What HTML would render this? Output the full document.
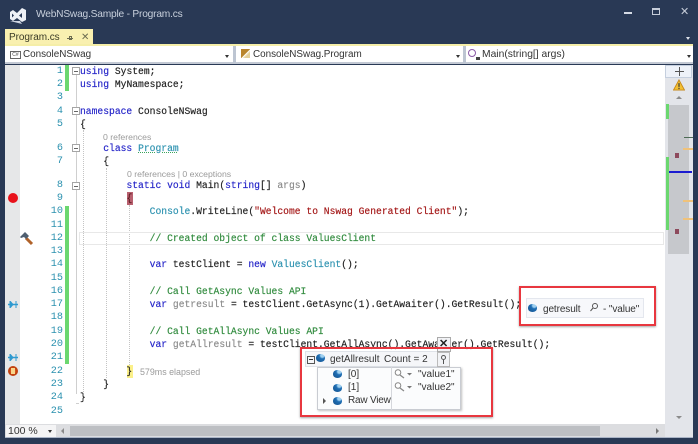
<!DOCTYPE html>
<html><head><meta charset="utf-8"><style>
html,body{margin:0;padding:0}
body{width:698px;height:444px;position:relative;overflow:hidden;background:#293955;font-family:"Liberation Sans",sans-serif}
div{position:absolute;box-sizing:border-box}
.c{font:9.68px/13px "Liberation Mono",monospace;left:80px;white-space:pre;color:#1c1c1c;height:13px;-webkit-text-stroke:.15px currentColor}
.n{font:10.2px/13px "Liberation Mono",monospace;color:#2b91af;width:20px;text-align:right;left:43px}
.k{color:#2323c8}.t{color:#2b91af}.g{color:#2f8a3c}.s{color:#a31515}.m{color:#8a8a8a}
.l{font:8.7px/10px "Liberation Sans",sans-serif;color:#9a9a9a;white-space:pre}
.u{font:9.9px/14px "Liberation Sans",sans-serif;color:#333;white-space:pre}
.b{font:10px/13px "Liberation Sans",sans-serif;color:#333;white-space:pre}
.f{width:8px;height:8px;border:1px solid #a5a5a5;left:72px;background:#fff}
.f:after{content:"";position:absolute;left:1px;top:2.500px;width:4px;height:1px;background:#666}
.d{width:0;border-left:1px dotted #c4c4c4}
.r{border:2.600px solid #e8373f;box-shadow:0 1px 2px rgba(0,0,0,.35)}
.o{width:9px;height:8px;background:radial-gradient(circle at 70% 20%,#9fd0f0 0 18%,#1f6fb5 35%,#14508a 100%);border-radius:50%/45%}
.h{width:4px;height:5px;background:#8d4a5c;left:675px}
.y{width:10px;height:2px;background:#f0c27a;left:683px}
</style></head><body>
<svg style="position:absolute;left:9px;top:7px" width="19" height="17" viewBox="0 0 19 17"><path d="M1 5l3-2 4 3 5-5 4 2v10l-4 2-5-4-4 3-3-2z" fill="#eef1f6"/><path d="M13 6l-3 2.500 3 2.500z" fill="#293955"/><path d="M3 6.500v4l2-2z" fill="#293955"/><path d="M1 14l6 1.500 6 1.500-2-3z" fill="#cfd6e2"/></svg>
<div style="left:36px;top:7px;font-size:10.2px;line-height:16px;letter-spacing:-.2px;color:#c8d0dc;white-space:pre">WebNSwag.Sample - Program.cs</div>
<div style="left:624px;top:12px;width:8px;height:2px;background:#d5dbe5"></div>
<div style="left:652px;top:8px;width:8px;height:7px;border:1px solid #c6cdd9;border-top-width:2px"></div>
<div style="left:680px;top:5px;color:#c6cdd9;font-size:11px;line-height:14px">✕</div>
<div style="left:686px;top:37px;border-left:2px solid transparent;border-right:2px solid transparent;border-top:3px solid #dfe4ec;width:0"></div>
<div style="left:5px;top:29px;width:88px;height:16px;background:#f9f0b0"></div>
<div style="left:9px;top:31px;font-size:10px;line-height:14px;letter-spacing:-.05px;color:#3b3b26;white-space:pre">Program.cs</div>
<div style="left:67px;top:38px;width:6px;height:1px;background:#6b6b50"></div>
<div style="left:69px;top:36px;width:3px;height:4px;border:1px solid #6b6b50"></div>
<div style="left:81px;top:31px;font-size:10px;line-height:13px;color:#6b6b50">✕</div>
<div style="left:5px;top:44px;width:688px;height:2px;background:#f5eea8"></div>
<div style="left:5px;top:46px;width:688px;height:18px;background:#fff;border-bottom:2px solid #c3c9d4"></div>
<div style="left:10px;top:51px;width:11px;height:8px;border:1px solid #666;font:5px/6px 'Liberation Sans',sans-serif;color:#444;text-align:center">C#</div>
<div class="u" style="left:23px;top:48px">ConsoleNSwag</div>
<div style="left:225px;top:55px;border-left:2px solid transparent;border-right:2px solid transparent;border-top:3px solid #333;width:0"></div>
<div style="left:233px;top:46px;width:3px;height:17px;background:#bdc5d2"></div>
<div style="left:241px;top:49px;width:9px;height:9px;background:linear-gradient(135deg,#b9852d 50%,#fff 52%,#e3cf99 70%)"></div>
<div class="u" style="left:253px;top:48px">ConsoleNSwag.Program</div>
<div style="left:456px;top:55px;border-left:2px solid transparent;border-right:2px solid transparent;border-top:3px solid #333;width:0"></div>
<div style="left:463px;top:46px;width:3px;height:17px;background:#bdc5d2"></div>
<div style="left:468px;top:49px;width:8px;height:8px;border:1px solid #8c5aa8;border-radius:50%"></div>
<div style="left:476px;top:57px;width:4px;height:3px;background:#444"></div>
<div class="u" style="left:482px;top:48px;font-size:10.3px">Main(string[] args)</div>
<div style="left:687px;top:55px;border-left:2px solid transparent;border-right:2px solid transparent;border-top:3px solid #333;width:0"></div>

<div style="left:5px;top:65px;width:688px;height:359px;background:#fff"></div>
<div style="left:5px;top:65px;width:15px;height:359px;background:#e6e7e8"></div>
<div style="left:65px;top:65px;width:4px;height:26px;background:#6bd76f"></div>
<div style="left:65px;top:206px;width:4px;height:158px;background:#6bd76f"></div>
<div style="left:76px;top:71px;height:323px;width:1px;background:#cfcfcf"></div>
<div style="left:76px;top:403px;width:3px;height:1px;background:#cfcfcf"></div>
<div class="d" style="left:83px;top:130px;height:262px"></div>
<div class="d" style="left:106px;top:168px;height:210px"></div>
<div class="d" style="left:129px;top:205px;height:160px"></div>
<div style="left:79px;top:232px;width:585px;height:13px;border:1px solid #e8e8e8"></div>

<div class="n" style="top:65px">1</div><div class="n" style="top:78px">2</div><div class="n" style="top:91px">3</div><div class="n" style="top:105px">4</div><div class="n" style="top:118px">5</div><div class="n" style="top:142px">6</div><div class="n" style="top:155px">7</div><div class="n" style="top:179px">8</div><div class="n" style="top:192px">9</div><div class="n" style="top:205px">10</div><div class="n" style="top:219px">11</div><div class="n" style="top:232px">12</div><div class="n" style="top:245px">13</div><div class="n" style="top:258px">14</div><div class="n" style="top:272px">15</div><div class="n" style="top:285px">16</div><div class="n" style="top:298px">17</div><div class="n" style="top:311px">18</div><div class="n" style="top:325px">19</div><div class="n" style="top:338px">20</div><div class="n" style="top:351px">21</div><div class="n" style="top:365px">22</div><div class="n" style="top:378px">23</div><div class="n" style="top:391px">24</div><div class="n" style="top:405px">25</div>

<div class="f" style="top:67px"></div><div class="f" style="top:107px"></div><div class="f" style="top:144px"></div><div class="f" style="top:182px"></div>

<div class="c" style="top:65px"><span class="k">using</span> System;</div>
<div class="c" style="top:78px"><span class="k">using</span> MyNamespace;</div>
<div class="c" style="top:105px"><span class="k">namespace</span> ConsoleNSwag</div>
<div class="c" style="top:118px">{</div>
<div class="l" style="left:103px;top:132px">0 references</div>
<div class="c" style="top:142px">    <span class="k">class</span> <span class="t" style="text-decoration:underline dotted #3aa55a">Program</span></div>
<div class="c" style="top:155px">    {</div>
<div class="l" style="left:127px;top:169px">0 references | 0 exceptions</div>
<div class="c" style="top:179px">        <span class="k">static void</span> Main(<span class="k">string</span>[] <span class="m">args</span>)</div>
<div style="left:127px;top:192px;width:6px;height:13px;background:#b8606f"></div>
<div class="c" style="top:192px">        <span style="color:#5a1a20">{</span></div>
<div class="c" style="top:205px">            <span class="t">Console</span>.WriteLine(<span class="s">"Welcome to Nswag Generated Client"</span>);</div>
<div class="c" style="top:232px">            <span class="g">// Created object of class ValuesClient</span></div>
<div class="c" style="top:258px">            <span class="k">var</span> testClient = <span class="k">new</span> <span class="t">ValuesClient</span>();</div>
<div class="c" style="top:285px">            <span class="g">// Call GetAsync Values API</span></div>
<div class="c" style="top:298px">            <span class="k">var</span> <span class="m">getresult</span> = testClient.GetAsync(1).GetAwaiter().GetResult();</div>
<div class="c" style="top:325px">            <span class="g">// Call GetAllAsync Values API</span></div>
<div class="c" style="top:338px">            <span class="k">var</span> <span class="m">getAllresult</span> = testClient.GetAllAsync().GetAwaiter().GetResult();</div>
<div style="left:127px;top:365px;width:6px;height:13px;background:#fbf08a"></div>
<div class="c" style="top:365px">        }</div>
<div class="l" style="left:140px;top:367px;font-size:8.900px">579ms elapsed</div>
<div class="c" style="top:378px">    }</div>
<div class="c" style="top:391px">}</div>

<div style="left:8px;top:193px;width:10px;height:10px;border-radius:50%;background:#e8111a"></div>
<svg style="position:absolute;left:19px;top:231px" width="15" height="15" viewBox="0 0 15 15"><path d="M7 7l6 6" stroke="#b0622a" stroke-width="3"/><path d="M1 6l5-5 4 4-3 3-2-2-3 1z" fill="#4f5f70"/></svg>
<svg style="position:absolute;left:8px;top:301px" width="11" height="7" viewBox="0 0 11 7"><path d="M0 3.500h10" stroke="#2f9ad0" stroke-width="1.500"/><path d="M2 0l3 3.500-3 3.500zM8 0v7" fill="#2f9ad0" stroke="#2f9ad0"/></svg>
<svg style="position:absolute;left:8px;top:354px" width="11" height="7" viewBox="0 0 11 7"><path d="M0 3.500h10" stroke="#2f9ad0" stroke-width="1.500"/><path d="M2 0l3 3.500-3 3.500zM8 0v7" fill="#2f9ad0" stroke="#2f9ad0"/></svg>
<div style="left:8px;top:366px;width:10px;height:10px;border-radius:50%;background:#d9541e;border:2px solid #c2410f"></div>
<div style="left:11px;top:368px;width:4px;height:6px;background:#f7d58a"></div>

<div style="left:5px;top:424px;width:688px;height:13px;background:#dcdde0"></div>
<div style="left:5px;top:437px;width:688px;height:1px;background:#aab4c6"></div>
<div style="left:6px;top:425px;width:50px;height:12px;background:#f4f4f5"></div>
<div class="u" style="left:8px;top:424px;font-size:10.500px">100 %</div>
<div style="left:48px;top:430px;border-left:2px solid transparent;border-right:2px solid transparent;border-top:3px solid #333;width:0"></div>
<div style="left:61px;top:428px;border-top:3px solid transparent;border-bottom:3px solid transparent;border-right:3px solid #8a8a8a;width:0"></div>
<div style="left:70px;top:426px;width:530px;height:10px;background:#bdbfc3"></div>
<div style="left:656px;top:428px;border-top:3px solid transparent;border-bottom:3px solid transparent;border-left:3px solid #777;width:0"></div>

<div style="left:665px;top:65px;width:28px;height:372px;background:#e3e5ea"></div>
<div style="left:665px;top:65px;width:27px;height:13px;background:#eef2f9;border:1px solid #c5cfde"></div>
<div style="left:675px;top:71px;width:9px;height:1px;background:#555"></div><div style="left:679px;top:67px;width:1px;height:9px;background:#555"></div>
<svg style="position:absolute;left:673px;top:79px" width="12" height="12" viewBox="0 0 13 12"><path d="M6.500 .5L12.500 11.500H.5z" fill="#f2c033" stroke="#c6871a"/><path d="M6.500 4v4M6.500 9v1.500" stroke="#3a3a3a" stroke-width="1.300"/></svg>
<div style="left:676px;top:96px;border-left:3px solid transparent;border-right:3px solid transparent;border-bottom:3px solid #8b8b8b;width:0"></div>
<div style="left:668px;top:105px;width:21px;height:149px;background:#c6c8cc"></div>
<div style="left:666px;top:104px;width:3px;height:15px;background:#6bd76f"></div>
<div style="left:666px;top:157px;width:3px;height:73px;background:#6bd76f"></div>
<div style="left:684px;top:137px;width:9px;height:1px;background:#4d6b55"></div>
<div style="left:669px;top:171px;width:23px;height:2px;background:#1b1bd0"></div>
<div class="h" style="top:153px"></div><div class="h" style="top:229px"></div>
<div class="y" style="top:148px"></div><div class="y" style="top:200px"></div><div class="y" style="top:218px"></div>
<div style="left:676px;top:416px;border-left:3px solid transparent;border-right:3px solid transparent;border-top:3px solid #8b8b8b;width:0"></div>

<div style="left:526px;top:298px;width:118px;height:20px;background:#f7f8fb;border:1px solid #e4e7ee"></div>
<div class="o" style="left:528px;top:304px"></div>
<div class="b" style="left:543px;top:303px;letter-spacing:-.1px">getresult</div>
<svg style="position:absolute;left:590px;top:303px" width="8" height="9" viewBox="0 0 8 9"><circle cx="5" cy="3" r="2.500" fill="none" stroke="#555"/><path d="M3 5L.5 8" stroke="#555"/></svg>
<div class="b" style="left:603px;top:303px;letter-spacing:-.1px">- "value"</div>
<div class="r" style="left:519px;top:286px;width:137px;height:40px"></div>

<div style="left:305px;top:351px;width:133px;height:16px;background:#f5f6f9;border:1px solid #dfe2e8"></div>
<div style="left:437px;top:337px;width:14px;height:15px;background:#f2f3f6;border:1px solid #aaa"></div>
<div style="left:439px;top:337px;font-size:11px;font-weight:bold;line-height:15px;color:#222">✕</div>
<div style="left:437px;top:352px;width:13px;height:15px;background:#f2f3f6;border:1px solid #bbb"></div>
<div style="left:441px;top:355px;width:5px;height:5px;border:1px solid #555;border-radius:50%"></div>
<div style="left:443px;top:360px;width:1px;height:4px;background:#555"></div>
<div style="left:307px;top:356px;width:8px;height:8px;border:1px solid #555"></div>
<div style="left:309px;top:359px;width:4px;height:1px;background:#333"></div>
<div class="o" style="left:316px;top:354px"></div>
<div class="b" style="left:330px;top:353px">getAllresult</div>
<div class="b" style="left:384px;top:353px">Count = 2</div>
<div style="left:317px;top:367px;width:144px;height:43px;background:#fbfcfd;border:1px solid #c9ccd2;box-shadow:1px 1px 2px rgba(0,0,0,.25)"></div>
<div style="left:391px;top:367px;width:1px;height:43px;background:#d5d7dc"></div>
<div class="o" style="left:333px;top:370px"></div><div class="b" style="left:348px;top:368px">[0]</div>
<div class="o" style="left:333px;top:384px"></div><div class="b" style="left:348px;top:381px">[1]</div>
<div style="left:323px;top:398px;border-top:3px solid transparent;border-bottom:3px solid transparent;border-left:3px solid #555;width:0"></div>
<div class="o" style="left:333px;top:397px"></div><div class="b" style="left:348px;top:394px;letter-spacing:-.2px">Raw View</div>
<svg style="position:absolute;left:394px;top:369px" width="20" height="26" viewBox="0 0 20 26"><circle cx="4" cy="3.500" r="2.800" fill="#fff" stroke="#888"/><path d="M6 6l4 3" stroke="#888" stroke-width="1.300"/><path d="M13 4h5l-2.500 2.500z" fill="#777"/><circle cx="4" cy="16.500" r="2.800" fill="#fff" stroke="#888"/><path d="M6 19l4 3" stroke="#888" stroke-width="1.300"/><path d="M13 17h5l-2.500 2.500z" fill="#777"/></svg>
<div class="b" style="left:418px;top:368px">"value1"</div>
<div class="b" style="left:418px;top:381px">"value2"</div>
<div class="r" style="left:300px;top:347px;width:193px;height:70px"></div>
</body></html>
